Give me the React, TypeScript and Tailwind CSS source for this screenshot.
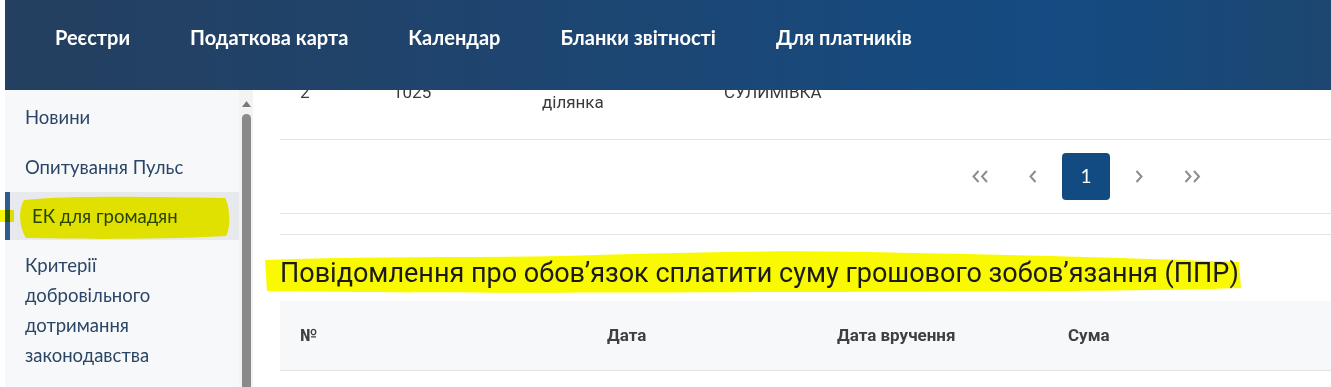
import React from "react";

const navItems = ["Реєстри", "Податкова карта", "Календар", "Бланки звітності", "Для платників"];

const lato = { fontFamily: "Lato, 'Noto Sans', sans-serif" } as const;

function Header() {
  return (
    <header className="h-[90px] w-full shrink-0 bg-gradient-to-r from-[#243f5f] via-[#134b82] via-80% to-[#1d4670]">
      <nav className="flex gap-[60px] pl-[50px] pt-[25px]" style={lato}>
        {navItems.map((item) => (
          <span key={item} className="text-[20px] font-bold leading-[24px] text-white">
            {item}
          </span>
        ))}
      </nav>
    </header>
  );
}

function Sidebar() {
  return (
    <div className="flex shrink-0">
      <aside className="w-[234px] bg-[#f7f8fa] pt-[2px] text-[18.5px] leading-[30px] text-[#2a4566]" style={lato}>
        <div className="px-[20px] py-[10px]">Новини</div>
        <div className="px-[20px] py-[10px]">Опитування Пульс</div>
        <div className="relative border-l-[5px] border-[#2e5b8c] bg-[#e8e9ec] py-[9px] pl-[22px]">
          ЕК для громадян
          <svg
            className="pointer-events-none absolute -left-[10px] top-0 mix-blend-multiply"
            width="235"
            height="50"
            viewBox="0 0 235 50"
          >
            <rect x="0" y="18" width="14" height="12" fill="#f4f400" />
            <path
              d="M24,8 C70,3 160,5 225,6 C230,14 231,36 226,44 C150,48 70,47 26,46 C19,35 18,18 24,8 Z"
              fill="#f7f700"
            />
          </svg>
        </div>
        <div className="px-[20px] py-[10px]">
          Критерії
          <br />
          добровільного
          <br />
          дотримання
          <br />
          законодавства
        </div>
      </aside>
      <div className="flex w-[14px] flex-col items-center bg-[#f3f3f3]">
        <svg className="mt-[11px]" width="9" height="6" viewBox="0 0 9 6">
          <path d="M4.5,0 L9,6 L0,6 Z" fill="#7a7a7a" />
        </svg>
        <div className="mt-[7px] w-[9px] flex-1 rounded-t-[5px] bg-[#8a8a8a]" />
      </div>
    </div>
  );
}

function Chevrons({ dir, double }: { dir: "left" | "right"; double?: boolean }) {
  const one = dir === "left" ? "M6,1 L1,6.5 L6,12" : "M1,1 L6,6.5 L1,12";
  return (
    <svg width={double ? 17 : 8} height="13" viewBox={double ? "0 0 17 13" : "0 0 8 13"} fill="none">
      <path d={one} stroke="#8d8d8d" strokeWidth="2" transform="translate(0.5 0)" />
      {double && <path d={one} stroke="#8d8d8d" strokeWidth="2" transform="translate(9 0)" />}
    </svg>
  );
}

function Main() {
  const roboto = { fontFamily: "Roboto, 'Noto Sans', sans-serif" } as const;
  return (
    <main className="min-w-0 flex-1 overflow-hidden bg-white pl-[27px]" style={roboto}>
      <div className="-mt-[35px] flex items-center border-b border-[#e4e4e4] pb-[26px] pt-[16px] text-[17px] leading-[21px] text-[#3a3a3a]">
        <div className="w-[113px] pl-[20px]">2</div>
        <div className="w-[149px]">1025</div>
        <div className="w-[182px]">
          Земельна
          <br />
          ділянка
        </div>
        <div>СУЛИМІВКА</div>
      </div>

      <div className="flex h-[74px] items-center justify-end gap-[5px] border-b border-[#e4e4e4] pr-[115px]">
        <div className="flex h-[48px] w-[48px] items-center justify-center">
          <Chevrons dir="left" double />
        </div>
        <div className="flex h-[48px] w-[48px] items-center justify-center">
          <Chevrons dir="left" />
        </div>
        <div className="flex h-[47px] w-[48px] items-center justify-center rounded-[4px] bg-[#124b82] text-[19px] text-white" style={lato}>
          1
        </div>
        <div className="flex h-[48px] w-[48px] items-center justify-center">
          <Chevrons dir="right" />
        </div>
        <div className="flex h-[48px] w-[48px] items-center justify-center">
          <Chevrons dir="right" double />
        </div>
      </div>

      <div className="h-[21px] border-b border-[#e4e4e4]" />

      <div className="relative mb-[9px] mt-[19px]">
        <svg
          className="pointer-events-none absolute -left-[17px] -top-[3px]"
          width="980"
          height="44"
          viewBox="0 0 980 44"
        >
          <path
            d="M2,9 C100,5 200,7 300,5 C400,2 500,-1 600,1 C700,3 820,5 976,11 L978,37 C900,40 700,41 500,41 C300,42 120,42 4,40 Z"
            fill="#f9f900"
          />
        </svg>
        <h2 className="relative text-[27px] font-normal leading-[38px] text-[#1a1a1a]">
          Повідомлення про обов’язок сплатити суму грошового зобов’язання (ППР)
        </h2>
      </div>

      <div className="flex h-[70px] items-center border-b border-[#e2e2e2] bg-[#f7f8fa] text-[17px] font-bold text-[#3f3f3f]">
        <div className="w-[327px] pl-[20px]">№</div>
        <div className="w-[230px]">Дата</div>
        <div className="w-[231px]">Дата вручення</div>
        <div>Сума</div>
      </div>
    </main>
  );
}

export default function App() {
  return (
    <div className="flex h-[387px] w-[1331px] flex-col overflow-hidden bg-white pl-[5px]">
      <Header />
      <div className="flex min-h-0 flex-1">
        <Sidebar />
        <Main />
      </div>
    </div>
  );
}
